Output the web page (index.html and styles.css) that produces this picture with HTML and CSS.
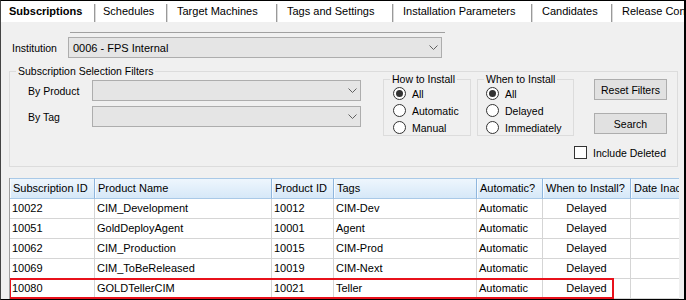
FILE: index.html
```html
<!DOCTYPE html>
<html>
<head>
<meta charset="utf-8">
<link rel="stylesheet" href="styles.css">
</head>
<body>
<div class="window">
  <div class="tabs">
    <div class="tab active">Subscriptions</div>
    <div class="tab t2">Schedules</div>
    <div class="tab t3">Target Machines</div>
    <div class="tab t4">Tags and Settings</div>
    <div class="tab t5">Installation Parameters</div>
    <div class="tab t6">Candidates</div>
    <div class="tab t7">Release Configuration</div>
  </div>
  <div class="panel">
    <div class="rule"></div>
    <div class="inst-row">
      <span class="inst-label">Institution</span>
      <div class="combo inst-combo">
        <span class="combo-text">0006 - FPS Internal</span>
        <svg class="chev" width="9" height="5" viewBox="0 0 9 5"><polyline points="0.5,0.5 4.5,4.5 8.5,0.5" fill="none" stroke="#606060" stroke-width="1"/></svg>
      </div>
    </div>
    <div class="group main-group">
      <div class="legend">Subscription Selection Filters</div>
      <div class="filters-row">
        <div class="filters">
          <div class="frow">
            <span class="flabel">By Product</span>
            <div class="combo fcombo">
              <svg class="chev" width="9" height="5" viewBox="0 0 9 5"><polyline points="0.5,0.5 4.5,4.5 8.5,0.5" fill="none" stroke="#606060" stroke-width="1"/></svg>
            </div>
          </div>
          <div class="frow">
            <span class="flabel">By Tag</span>
            <div class="combo fcombo">
              <svg class="chev" width="9" height="5" viewBox="0 0 9 5"><polyline points="0.5,0.5 4.5,4.5 8.5,0.5" fill="none" stroke="#606060" stroke-width="1"/></svg>
            </div>
          </div>
        </div>
        <div class="group opt how">
          <div class="legend">How to Install</div>
          <div class="radios">
            <div class="radio-row"><span class="radio on"></span>All</div>
            <div class="radio-row"><span class="radio"></span>Automatic</div>
            <div class="radio-row"><span class="radio"></span>Manual</div>
          </div>
        </div>
        <div class="group opt when">
          <div class="legend">When to Install</div>
          <div class="radios">
            <div class="radio-row"><span class="radio on"></span>All</div>
            <div class="radio-row"><span class="radio"></span>Delayed</div>
            <div class="radio-row"><span class="radio"></span>Immediately</div>
          </div>
        </div>
        <div class="actions">
          <button class="btn">Reset Filters</button>
          <button class="btn search">Search</button>
          <div class="check-row"><span class="check"></span>Include Deleted</div>
        </div>
      </div>
    </div>
    <div class="grid">
      <div class="grow head">
        <div class="h">Subscription ID</div>
        <div class="h">Product Name</div>
        <div class="h">Product ID</div>
        <div class="h">Tags</div>
        <div class="h">Automatic?</div>
        <div class="h">When to Install?</div>
        <div class="h">Date Inactivated</div>
      </div>
      <div class="grow">
        <div class="c">10022</div><div class="c">CIM_Development</div><div class="c">10012</div><div class="c">CIM-Dev</div><div class="c">Automatic</div><div class="c mid">Delayed</div><div class="c"></div>
      </div>
      <div class="grow">
        <div class="c">10051</div><div class="c">GoldDeployAgent</div><div class="c">10001</div><div class="c">Agent</div><div class="c">Automatic</div><div class="c mid">Delayed</div><div class="c"></div>
      </div>
      <div class="grow">
        <div class="c">10062</div><div class="c">CIM_Production</div><div class="c">10015</div><div class="c">CIM-Prod</div><div class="c">Automatic</div><div class="c mid">Delayed</div><div class="c"></div>
      </div>
      <div class="grow">
        <div class="c">10069</div><div class="c">CIM_ToBeReleased</div><div class="c">10019</div><div class="c">CIM-Next</div><div class="c">Automatic</div><div class="c mid">Delayed</div><div class="c"></div>
      </div>
      <div class="grow">
        <div class="c">10080</div><div class="c">GOLDTellerCIM</div><div class="c">10021</div><div class="c">Teller</div><div class="c">Automatic</div><div class="c mid">Delayed</div><div class="c"></div>
      </div>
      <div class="highlight"></div>
    </div>
  </div>
</div>
</body>
</html>
```

FILE: styles.css
```css
body {
  margin: 0;
}

.window {
  width: 686px;
  height: 300px;
  box-sizing: border-box;
  border-top: 1px solid #000;
  border-left: 1px solid #444;
  border-right: 2px solid #000;
  border-bottom: 1px solid #000;
  background: #f0f0f0;
  overflow: hidden;
  font-family: "Liberation Sans", Arial, sans-serif;
  color: #000;
  display: flex;
  flex-direction: column;
}

/* Tabs */
.tabs {
  display: flex;
  height: 21px;
  flex: none;
  background: #fff;
  white-space: nowrap;
  overflow: hidden;
}

.tab {
  flex: none;
  box-sizing: border-box;
  height: 18px;
  margin-top: 3px;
  line-height: 15px;
  font-size: 11px;
  padding-left: 10px;
  border-left: 1px solid #9a9a9a;
  box-shadow: inset 1px 0 0 #dadada;
}

.tab.active {
  width: 93px;
  height: 21px;
  margin-top: 0;
  line-height: 21px;
  padding-left: 8px;
  border-left: none;
  box-shadow: none;
  font-weight: bold;
}

.t2 { width: 72px; padding-left: 8px; }
.t3 { width: 110px; }
.t4 { width: 116px; }
.t5 { width: 139px; }
.t6 { width: 80px; }
.t7 { flex: 1; }

/* Panel */
.panel {
  flex: 1;
  display: flex;
  flex-direction: column;
  padding-left: 8px;
  font-size: 10.5px;
}

.rule {
  margin: 10px 0 0 61px;
  width: 375px;
  height: 1px;
  background: #a0a0a0;
}

.inst-row {
  display: flex;
  align-items: center;
  height: 21px;
  margin-top: 4px;
}

.inst-label {
  width: 59px;
  padding-left: 3px;
  box-sizing: border-box;
}

.combo {
  box-sizing: border-box;
  height: 21px;
  background: #e5e5e5;
  border: 1px solid #adadad;
  display: flex;
  align-items: center;
  padding: 0 3px 0 4px;
}

.combo-text {
  font-size: 11px;
}

.chev {
  margin-left: auto;
  display: block;
}

.inst-combo {
  width: 374px;
}

/* Group boxes */
.group {
  box-sizing: border-box;
  border: 1px solid #dcdcdc;
}

.legend {
  display: table;
  height: 13px;
  line-height: 13px;
  margin: -7px 0 0 6px;
  padding: 0 2px;
  background: #f0f0f0;
}

.main-group {
  margin-top: 13px;
  width: 669px;
  height: 96px;
  flex: none;
}

.filters-row {
  display: flex;
  align-items: flex-start;
}

.filters {
  margin: 2px 0 0 18px;
  display: flex;
  flex-direction: column;
  gap: 5px;
}

.frow {
  display: flex;
  align-items: center;
  height: 21px;
}

.flabel {
  width: 64px;
}

.fcombo {
  width: 269px;
}

.opt {
  margin-top: 1px;
  height: 57px;
  flex: none;
}

.how {
  width: 88px;
  margin-left: 22px;
}

.when {
  width: 97px;
  margin-left: 6px;
}

.radios {
  margin-top: -1px;
  padding-left: 9px;
}

.when .radios {
  padding-left: 8px;
}

.radio-row {
  display: flex;
  align-items: center;
  gap: 6px;
  height: 17px;
  white-space: nowrap;
}

.radio {
  flex: none;
  width: 13px;
  height: 13px;
  box-sizing: border-box;
  border: 1px solid #333;
  border-radius: 50%;
  background: #fff;
  display: flex;
  align-items: center;
  justify-content: center;
}

.radio.on::after {
  content: "";
  width: 7px;
  height: 7px;
  border-radius: 50%;
  background: #333;
}

.actions {
  margin-top: 1px;
  width: 93px;
  flex: none;
  display: flex;
  flex-direction: column;
  align-items: flex-end;
}

.btn {
  width: 73px;
  height: 21px;
  box-sizing: border-box;
  border: 1px solid #adadad;
  background: #e1e1e1;
  font-family: "Liberation Sans", Arial, sans-serif;
  font-size: 10.5px;
  color: #000;
  padding: 0;
  margin: 0;
}

.search {
  margin-top: 13px;
}

.check-row {
  align-self: stretch;
  margin-top: 12px;
  height: 13px;
  display: flex;
  align-items: center;
  gap: 6px;
  white-space: nowrap;
}

.check {
  flex: none;
  width: 13px;
  height: 13px;
  box-sizing: border-box;
  border: 1px solid #333;
  background: #fff;
}

/* Data grid */
.grid {
  position: relative;
  margin-top: 11px;
  width: 670px;
  box-sizing: border-box;
  border-left: 1px solid #a0a0a0;
  overflow: hidden;
  flex: none;
  font-size: 11px;
}

.grow {
  display: grid;
  grid-template-columns: 85px 177px 62px 143px 66px 88px 100px;
  height: 20px;
}

.grow.head {
  height: 21px;
}

.h {
  box-sizing: border-box;
  height: 21px;
  line-height: 19px;
  padding-left: 3px;
  white-space: nowrap;
  overflow: hidden;
  background: linear-gradient(#eef6fd, #d6e8f8);
  border-top: 1px solid #a9c9e7;
  border-bottom: 1px solid #a9c9e7;
  border-right: 1px solid #8fb6dd;
  box-shadow: inset 1px 0 0 #f7fbff;
}

.c {
  box-sizing: border-box;
  height: 20px;
  line-height: 19px;
  padding-left: 2px;
  white-space: nowrap;
  overflow: hidden;
  background: #fff;
  border-right: 1px solid #d5d5d5;
  border-bottom: 1px solid #d5d5d5;
}

.c.mid {
  text-align: center;
  padding-left: 0;
}

.highlight {
  position: absolute;
  left: -1px;
  top: 100px;
  width: 605px;
  height: 21px;
  box-sizing: border-box;
  border: 2px solid #e8111b;
}
```
